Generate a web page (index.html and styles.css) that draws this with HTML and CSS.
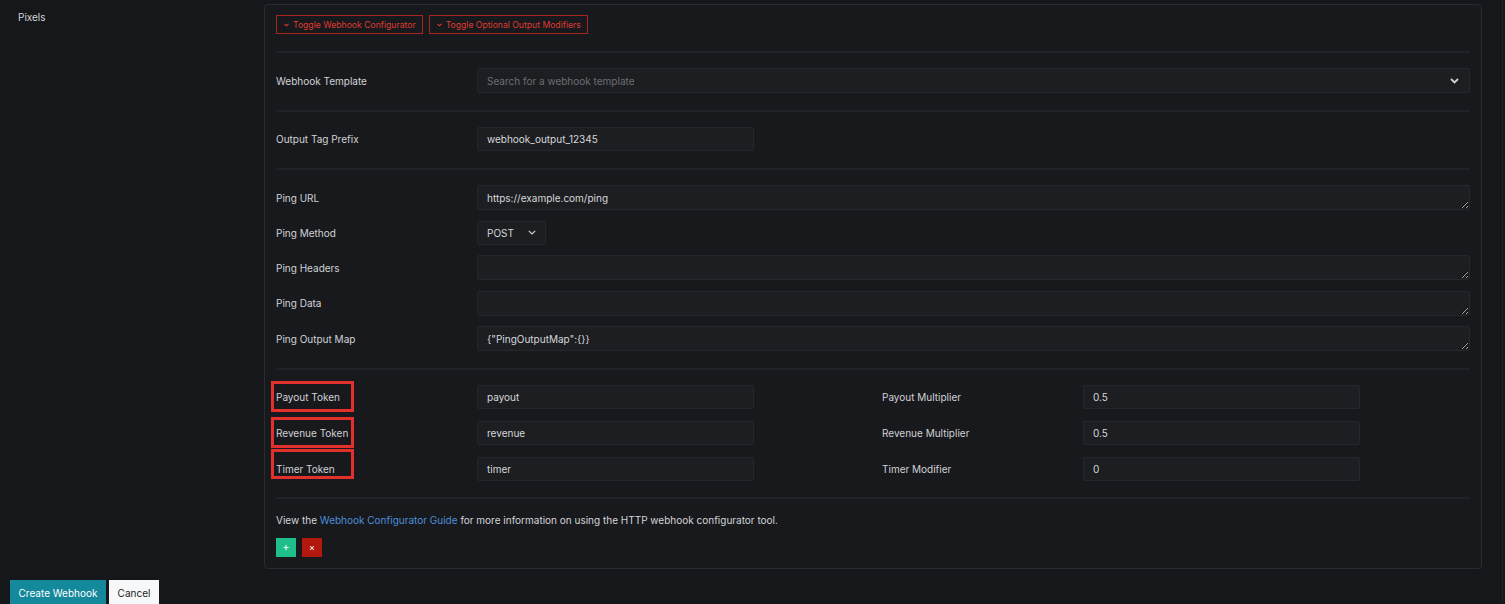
FILE: index.html
```html
<!DOCTYPE html>
<html lang="en">
<head>
  <meta charset="UTF-8">
  <title>Create Webhook</title>
  <link rel="stylesheet" href="styles.css">
</head>
<body>
  <div class="page">
    <div class="layout">
      <div class="side">Pixels</div>

      <div class="panel">
        <div class="toggles">
          <button class="toggle">
            <svg width="5" height="4" viewBox="0 0 5 4"><polyline points="0.5,0.8 2.5,2.8 4.5,0.8" fill="none" stroke="currentColor" stroke-width="1.1"/></svg>
            Toggle Webhook Configurator
          </button>
          <button class="toggle">
            <svg width="5" height="4" viewBox="0 0 5 4"><polyline points="0.5,0.8 2.5,2.8 4.5,0.8" fill="none" stroke="currentColor" stroke-width="1.1"/></svg>
            Toggle Optional Output Modifiers
          </button>
        </div>

        <hr class="sep">

        <div class="row">
          <label>Webhook Template</label>
          <div class="field tall select">
            <span class="placeholder">Search for a webhook template</span>
            <svg width="9" height="6" viewBox="0 0 9 6"><polyline points="1,1 4.5,4.5 8,1" fill="none" stroke="#d0d1d3" stroke-width="1.8"/></svg>
          </div>
        </div>

        <hr class="sep">

        <div class="row">
          <label>Output Tag Prefix</label>
          <input class="field short" value="webhook_output_12345">
        </div>

        <hr class="sep">

        <div class="stack">
          <div class="row">
            <label>Ping URL</label>
            <textarea class="field tall" rows="1">https://example.com/ping</textarea>
          </div>
          <div class="row">
            <label>Ping Method</label>
            <div class="field select method">
              <span>POST</span>
              <svg width="8" height="5" viewBox="0 0 8 5"><polyline points="0.8,0.8 4,4 7.2,0.8" fill="none" stroke="#d0d1d3" stroke-width="1.2"/></svg>
            </div>
          </div>
          <div class="row">
            <label>Ping Headers</label>
            <textarea class="field tall" rows="1"></textarea>
          </div>
          <div class="row">
            <label>Ping Data</label>
            <textarea class="field tall" rows="1"></textarea>
          </div>
          <div class="row">
            <label>Ping Output Map</label>
            <textarea class="field tall" rows="1">{"PingOutputMap":{}}</textarea>
          </div>
        </div>

        <hr class="sep">

        <div class="pairs">
          <div class="row half">
            <label class="marked">Payout Token</label>
            <input class="field" value="payout">
          </div>
          <div class="row half">
            <label>Payout Multiplier</label>
            <input class="field" value="0.5">
          </div>
          <div class="row half">
            <label class="marked">Revenue Token</label>
            <input class="field" value="revenue">
          </div>
          <div class="row half">
            <label>Revenue Multiplier</label>
            <input class="field" value="0.5">
          </div>
          <div class="row half">
            <label class="marked raised">Timer Token</label>
            <input class="field" value="timer">
          </div>
          <div class="row half">
            <label>Timer Modifier</label>
            <input class="field" value="0">
          </div>
        </div>

        <hr class="sep last">

        <p class="note">View the <a href="#">Webhook Configurator Guide</a> for more information on using the HTTP webhook configurator tool.</p>

        <div class="actions">
          <button class="square add">+</button>
          <button class="square remove">&times;</button>
        </div>
      </div>
    </div>

    <div class="footer">
      <button class="btn primary">Create Webhook</button>
      <button class="btn plain">Cancel</button>
    </div>
  </div>
</body>
</html>
```

FILE: styles.css
```css
* {
  margin: 0;
  padding: 0;
  box-sizing: border-box;
  font-family: Inter, 'Noto Sans', sans-serif;
}

html,
body {
  background: #16171b;
}

body {
  color: #d1d2d5;
  font-size: 10px;
  color-scheme: dark;
  overflow: hidden;
}

.page {
  min-height: 604px;
  margin-right: 2px;
  border-right: 1px solid #212226;
  padding: 4px 20px 0 10px;
}

.layout {
  display: grid;
  grid-template-columns: 254px 1fr;
}

.side {
  padding: 7px 0 0 8px;
  line-height: 12px;
  color: #d4d5d8;
}

.panel {
  background: #18191d;
  border: 1px solid #2a2b30;
  border-radius: 4px;
  padding: 10px 11px 11px;
}

.toggles {
  display: flex;
  gap: 6px;
}

.toggle {
  height: 19px;
  display: flex;
  align-items: center;
  gap: 4px;
  padding: 0 6px 0 7px;
  background: transparent;
  border: 1px solid #a8251e;
  color: #df3b30;
  font-size: 8.65px;
}

.sep {
  border: 0;
  height: 2px;
  background: #212227;
  margin: 17px 0 15px;
}

.sep.last {
  margin-top: 16px;
}

.row {
  display: grid;
  grid-template-columns: 201px 1fr;
  align-items: center;
}

.row label {
  line-height: 12px;
}

.field {
  height: 24px;
  width: 100%;
  background: #1c1e22;
  border: 1px solid #25272c;
  border-radius: 2px;
  color: #d6d7da;
  font-size: 10px;
  padding: 0 9px;
  outline: none;
}

.field.tall {
  height: 25px;
}

.short {
  width: 277px;
}

textarea.field {
  display: block;
  resize: vertical;
  padding: 6px 9px;
  line-height: 12px;
  overflow: hidden;
}

.select {
  display: flex;
  align-items: center;
  justify-content: space-between;
  padding-right: 10px;
}

.placeholder {
  color: #6c6e73;
}

.method {
  width: 69px;
  padding-right: 9px;
}

.stack {
  display: flex;
  flex-direction: column;
  gap: 10.5px;
}

.pairs {
  display: grid;
  grid-template-columns: 1fr 1fr;
  column-gap: 18px;
  row-gap: 12px;
}

.half {
  grid-template-columns: 201px 277px;
}

.marked {
  position: relative;
}

.marked::after {
  content: '';
  box-sizing: border-box;
  position: absolute;
  left: -5px;
  top: -10px;
  bottom: -9px;
  width: 83px;
  border: 3px solid #e3302d;
}

.marked.raised::after {
  top: -14px;
  bottom: -4px;
}

.note {
  line-height: 13px;
  color: #d4d5d8;
}

.note a {
  color: #4c8fd8;
  text-decoration: none;
}

.actions {
  display: flex;
  gap: 6px;
  margin-top: 11px;
}

.square {
  width: 20px;
  height: 19px;
  border: 0;
  color: #fff;
  font-size: 11px;
  line-height: 19px;
}

.add {
  background: #1fbf8c;
}

.remove {
  background: #b3180f;
  font-size: 9px;
}

.footer {
  display: flex;
  gap: 3px;
  padding-top: 11px;
}

.btn {
  height: 26px;
  border: 0;
  font-size: 10px;
}

.primary {
  width: 96px;
  background: #14899b;
  color: #fff;
}

.plain {
  width: 50px;
  background: #f7f8f9;
  color: #222;
}
```
